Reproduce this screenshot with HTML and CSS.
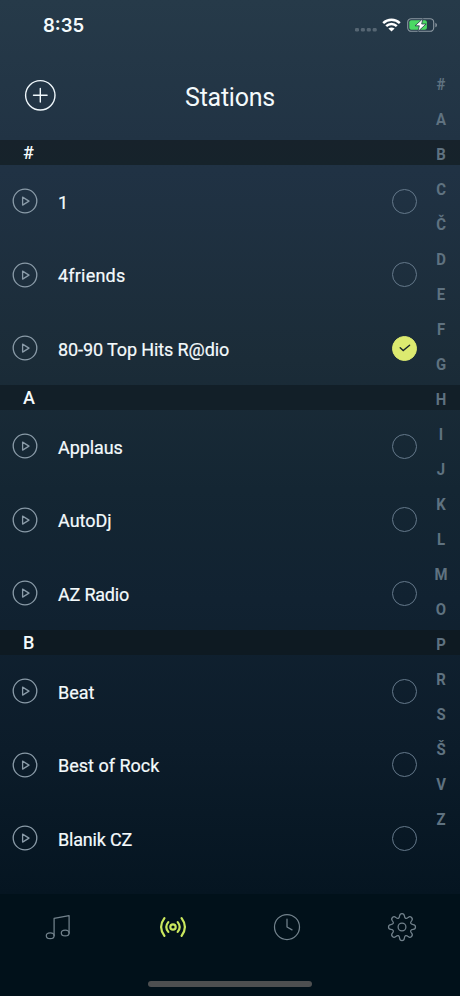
FILE: index.html
```html
<!DOCTYPE html>
<html lang="en">
<head>
<meta charset="utf-8">
<title>Stations</title>
<link rel="stylesheet" href="styles.css">
</head>
<body>
<svg width="0" height="0" class="defs" aria-hidden="true">
  <symbol id="play" viewBox="0 0 26 26"><circle cx="13" cy="13" r="11.8"/><path d="M10.6 9.1v8l6.4-4z"/></symbol>
</svg>
<div class="app">
  <div class="status">
    <span class="time">8:35</span>
    <span class="indicators">
      <svg class="dots" width="22" height="4" viewBox="0 0 22 4"><rect x="0" y="0" width="4" height="3.4" rx="1.2"/><rect x="5.9" y="0" width="4" height="3.4" rx="1.2"/><rect x="11.8" y="0" width="4" height="3.4" rx="1.2"/><rect x="17.7" y="0" width="4" height="3.4" rx="1.2"/></svg>
      <svg class="wifi" width="19" height="14" viewBox="0 0 19 14"><path d="M1.2 5.1C5.9.6 13.1.6 17.8 5.1M4.2 8.2c3-2.9 7.6-2.9 10.6 0" fill="none" stroke="#fff" stroke-width="2.5"/><path d="M9.5 13.6 6.4 10.6c1.8-1.6 4.4-1.6 6.2 0z" fill="#fff"/></svg>
      <svg class="battery" width="31" height="14" viewBox="0 0 31 14"><rect x=".7" y=".7" width="26" height="12.6" rx="3.6" fill="none" stroke="#8d99a2" stroke-width="1.1"/><path d="M28.4 4.7c2 .8 2 3.8 0 4.6z" fill="#8d99a2"/><rect x="2.3" y="2.3" width="17.6" height="9.4" rx="2" fill="#4bd964"/><path d="M15.9.6 8 7.8h4.3l-1.4 5.8 8.2-7.6h-4.4z" fill="#fff" stroke="#243746" stroke-width=".8"/></svg>
    </span>
  </div>
  <header class="header">
    <svg class="add" width="32" height="32" viewBox="0 0 32 32"><circle cx="16.3" cy="16.3" r="14.7"/><path d="M16.3 9.5v13.6M9.5 16.3h13.6"/></svg>
    <h1 class="title">Stations</h1>
  </header>
  <main class="list">
    <h2 class="section">#</h2>
    <div class="row"><svg class="play"><use href="#play"/></svg><span class="name">1</span><i class="check"></i></div>
    <div class="row"><svg class="play"><use href="#play"/></svg><span class="name wide">4friends</span><i class="check"></i></div>
    <div class="row"><svg class="play"><use href="#play"/></svg><span class="name tight">80-90 Top Hits R@dio</span><i class="check on"><svg width="12" height="8" viewBox="0 0 12 8"><path d="M1.2 3.8 4.2 6.6 10.6 1.2"/></svg></i></div>
    <h2 class="section">A</h2>
    <div class="row"><svg class="play"><use href="#play"/></svg><span class="name tight">Applaus</span><i class="check"></i></div>
    <div class="row"><svg class="play"><use href="#play"/></svg><span class="name">AutoDj</span><i class="check"></i></div>
    <div class="row"><svg class="play"><use href="#play"/></svg><span class="name tighter">AZ Radio</span><i class="check"></i></div>
    <h2 class="section">B</h2>
    <div class="row"><svg class="play"><use href="#play"/></svg><span class="name">Beat</span><i class="check"></i></div>
    <div class="row"><svg class="play"><use href="#play"/></svg><span class="name">Best of Rock</span><i class="check"></i></div>
    <div class="row"><svg class="play"><use href="#play"/></svg><span class="name tighter">Blanik CZ</span><i class="check"></i></div>
  </main>
  <nav class="tabs">
    <svg class="tab" width="32" height="32" viewBox="0 0 32 32"><ellipse cx="8.2" cy="24.7" rx="3.9" ry="2.9"/><ellipse cx="23.2" cy="22" rx="3.9" ry="2.9"/><path d="M12.1 24.7V7.3L27.1 4.7V22"/></svg>
    <svg class="tab active" width="32" height="32" viewBox="0 0 32 32"><circle cx="16" cy="16" r="2.7"/><path d="M11.3 11.1q-4 4.9 0 9.8M20.7 11.1q4 4.9 0 9.8M7.4 7.2q-6.6 8.8 0 17.6M24.6 7.2q6.6 8.8 0 17.6"/></svg>
    <svg class="tab" width="32" height="32" viewBox="0 0 32 32"><circle cx="16" cy="16" r="12.5"/><path d="M16 8.2V16l5 2.9"/></svg>
    <svg class="tab" width="32" height="32" viewBox="0 0 32 32"><circle cx="16" cy="16" r="3.9"/><path d="M13.6 4.9C13.9 1.7 18.1 1.7 18.4 4.9C18.7 7.5 20.2 8.2 22.2 6.4C24.6 4.4 27.6 7.4 25.6 9.8C23.8 11.8 24.5 13.3 27.1 13.6C30.3 13.9 30.3 18.1 27.1 18.4C24.5 18.7 23.8 20.2 25.6 22.2C27.6 24.6 24.6 27.6 22.2 25.6C20.2 23.8 18.7 24.5 18.4 27.1C18.1 30.3 13.9 30.3 13.6 27.1C13.3 24.5 11.8 23.8 9.8 25.6C7.4 27.6 4.4 24.6 6.4 22.2C8.2 20.2 7.5 18.7 4.9 18.4C1.7 18.1 1.7 13.9 4.9 13.6C7.5 13.3 8.2 11.8 6.4 9.8C4.4 7.4 7.4 4.4 9.8 6.4C11.8 8.2 13.3 7.5 13.6 4.9Z"/></svg>
  </nav>
  <div class="home"></div>
  <div class="index">
    <span>#</span><span>A</span><span>B</span><span>C</span><span>Č</span><span>D</span><span>E</span><span>F</span><span>G</span><span>H</span><span>I</span><span>J</span><span>K</span><span>L</span><span>M</span><span>O</span><span>P</span><span>R</span><span>S</span><span>Š</span><span>V</span><span>Z</span>
  </div>
</div>
</body>
</html>
```
FILE: styles.css
```css
* { box-sizing: border-box; margin: 0; padding: 0; }
body { width: 460px; height: 996px; overflow: hidden; background: #01111a; font-family: Roboto, "Liberation Sans", sans-serif; color: #f4fafc; }
svg { display: block; flex: none; }
.defs { position: absolute; }
.app { position: relative; display: flex; flex-direction: column; height: 996px;
  background: linear-gradient(#263a49 0, #213344 140px, #203244 170px, #1b2c38 360px, #142633 490px, #112231 600px, #0c1c2a 750px, #051521 894px); }
.status { display: flex; justify-content: space-between; height: 50px; padding: 0 22.5px 0 43px; }
.time { font: 600 18.5px/50px Inter, sans-serif; letter-spacing: 0; }
.indicators { display: flex; align-items: center; height: 49px; }
.dots { margin: 10px 5px 0 0; fill: #566673; }
.wifi { margin-right: 6px; }
.header { position: relative; display: flex; align-items: center; justify-content: center; height: 90px; }
.add { position: absolute; left: 24px; top: 29px; fill: none; stroke: #f0f8fc; stroke-width: 1.4; stroke-linecap: round; }
.title { font-size: 25px; line-height: 30px; font-weight: 400; letter-spacing: -.25px; margin-top: 5px; }
.section { height: 24.5px; padding-left: 23px; background: linear-gradient(#17222b, #16232b); font-size: 18px; line-height: 26px; font-weight: 500; }
.section:nth-of-type(2) { background: #121f28; }
.section:nth-of-type(3) { background: #0e1a22; }
.row { display: flex; align-items: center; height: 73.5px; padding: 0 43px 0 12px; }
.play { width: 26px; height: 26px; fill: none; stroke: #8a9ba8; stroke-width: 1.3; stroke-linejoin: round; }
.name { flex: 1; margin-left: 20px; padding-top: 3px; font-size: 18px; line-height: 24px; font-weight: 400; -webkit-text-stroke: .2px; white-space: nowrap; }
.wide { letter-spacing: .2px; }
.tight { letter-spacing: -.1px; }
.tighter { letter-spacing: -.2px; }
.check { display: flex; align-items: center; justify-content: center; width: 25px; height: 25px; border: 1.2px solid #64788a; border-radius: 50%; }
.on { background: #dcea70; border-color: #dcea70; }
.on svg { fill: none; stroke: #17252d; stroke-width: 1.4; stroke-linecap: round; }
.index { position: absolute; top: 66.5px; right: 8.5px; width: 22px; font-size: 16px; font-weight: 700; line-height: 35.04px; color: #5f7280; text-align: center; }
.index span { display: block; transform: scaleX(.93); }
.tabs { display: flex; justify-content: space-between; height: 102px; margin-top: 19px; padding: 17px 42.5px 0 42px; background: #01111a; }
.tab { fill: none; stroke: #72828c; stroke-width: 1.25; stroke-linejoin: round; stroke-linecap: round; }
.active { stroke: #c9e75e; stroke-width: 2.2; }
.home { position: absolute; left: 148px; top: 981px; width: 164px; height: 6px; border-radius: 3px; background: #4d4f50; }
```
